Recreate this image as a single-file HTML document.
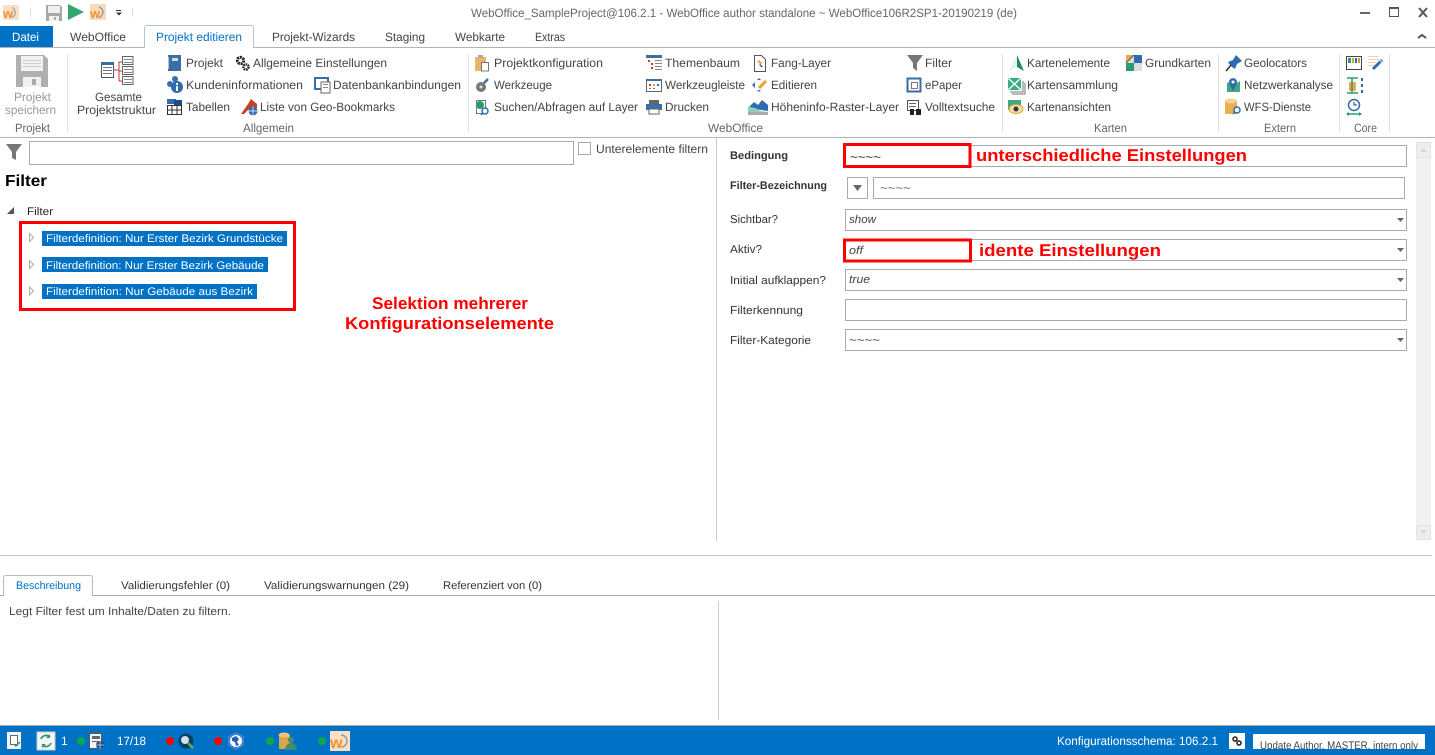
<!DOCTYPE html>
<html lang="de"><head><meta charset="utf-8"><title>WebOffice author</title>
<style>
html,body{margin:0;padding:0;background:#fff;width:1435px;height:755px;overflow:hidden}
svg{display:block;font-family:"Liberation Sans",sans-serif;font-size:12px}
.t{fill:#444}.l{fill:#666;font-size:12px}.d{fill:#999}
.s{fill:#333;font-size:11.5px}
.b{fill:none;stroke:#aaa;stroke-width:1}
.r{fill:none;stroke:#f00;stroke-width:3}
.a{fill:#f00;font-weight:bold;font-size:17px}
.i{font-style:italic;fill:#444;font-size:11.5px}
</style></head><body>
<svg width="1435" height="755" viewBox="0 0 1435 755" xmlns="http://www.w3.org/2000/svg" text-rendering="geometricPrecision">
<rect width="1435" height="755" fill="#fff"/>

<!-- QAT -->
<g id="logo1"><rect x="3" y="5" width="16" height="15" fill="#fbe0c8"/><text x="3" y="18" fill="#f0922c" font-weight="bold" font-size="13">w</text><path d="M12 7.500a5.500 5.500 0 0 1 0 10" fill="none" stroke="#aaa" stroke-width="1.500"/></g>
<rect x="30" y="9" width="1" height="8" fill="#ddd"/>
<path d="M46 5h14l2 2v14h-16z" fill="#a8a8a8"/><rect x="48" y="6" width="12" height="7" fill="#f0f0f0"/><rect x="49" y="16" width="10" height="5" fill="#f0f0f0"/><rect x="54" y="17" width="2" height="3" fill="#a8a8a8"/>
<path d="M68 4l16 8-16 8z" fill="#35a570"/>
<rect x="90" y="4" width="16" height="16" fill="#fbd9bd"/><text x="90" y="18" fill="#f0922c" font-weight="bold" font-size="13">w</text><path d="M99 7a5.500 5.500 0 0 1 0 10.500" fill="none" stroke="#999" stroke-width="1.500"/>
<rect x="116" y="10" width="5" height="1" fill="#333"/><path d="M116 12.500h6l-3 3z" fill="#333"/>
<rect x="132" y="9" width="1" height="8" fill="#ddd"/>
<text x="471" y="17" fill="#666" textLength="546" lengthAdjust="spacingAndGlyphs">WebOffice_SampleProject@106.2.1 - WebOffice author standalone ~ WebOffice106R2SP1-20190219 (de)</text>

<!-- Window buttons -->
<rect x="1360" y="12" width="10" height="2" fill="#666"/>
<rect x="1389.500" y="7.500" width="9" height="9" fill="none" stroke="#555"/><rect x="1389" y="7" width="10" height="2" fill="#555"/>
<path d="M1419 8l8 9M1427 8l-8 9" stroke="#555" stroke-width="2" fill="none"/>
<path d="M1418 38l4-3 4 3" stroke="#555" stroke-width="2" fill="none"/>

<!-- Tabs -->
<rect x="0" y="26" width="53" height="21" fill="#0072c6"/>
<text x="12" y="41" fill="#fff" textLength="27" lengthAdjust="spacingAndGlyphs">Datei</text>
<text x="70" y="41" class="t" textLength="56" lengthAdjust="spacingAndGlyphs">WebOffice</text>
<rect y="47" width="1435" height="1" fill="#b4b4b4"/>
<path d="M144.500 47.500V28q0-2.500 2.500-2.500h104q2.500 0 2.500 2.500V47.500" fill="#fff" stroke="#b4c8d4"/>
<rect x="145" y="47" width="108" height="1" fill="#fff"/>
<text x="156" y="41" fill="#0072c6" textLength="86" lengthAdjust="spacingAndGlyphs">Projekt editieren</text>
<text x="272" y="41" class="t" textLength="83" lengthAdjust="spacingAndGlyphs">Projekt-Wizards</text>
<text x="385" y="41" class="t" textLength="40" lengthAdjust="spacingAndGlyphs">Staging</text>
<text x="455" y="41" class="t" textLength="50" lengthAdjust="spacingAndGlyphs">Webkarte</text>
<text x="535" y="41" class="t" textLength="30" lengthAdjust="spacingAndGlyphs">Extras</text>

<!-- Ribbon -->
<rect y="137" width="1435" height="1" fill="#b4b4b4"/>
<g fill="#e2e2e2"><rect x="67" y="54" width="1" height="78"/><rect x="468" y="54" width="1" height="78"/><rect x="1002" y="54" width="1" height="78"/><rect x="1218" y="54" width="1" height="78"/><rect x="1339" y="54" width="1" height="78"/><rect x="1389" y="54" width="1" height="78"/></g>

<path d="M16 55h28l4 4v28H16z" fill="#b0b0b0"/><rect x="21" y="56" width="22" height="15" fill="#f1f1f1"/><g fill="#ccc"><rect x="23" y="60" width="18" height="1"/><rect x="23" y="63" width="18" height="1"/><rect x="23" y="66" width="18" height="1"/></g><rect x="23" y="77" width="18" height="10" fill="#f1f1f1"/><rect x="32" y="79" width="4" height="6" fill="#aaa"/>
<text x="14" y="101" class="d" textLength="37" lengthAdjust="spacingAndGlyphs">Projekt</text>
<text x="5" y="114" class="d" textLength="51" lengthAdjust="spacingAndGlyphs">speichern</text>
<text x="15" y="132" class="l" textLength="35" lengthAdjust="spacingAndGlyphs">Projekt</text>

<!-- Gesamte Projektstruktur icon -->
<rect x="101.500" y="62.500" width="12" height="15" fill="#fff" stroke="#555"/><rect x="101" y="62" width="13" height="3" fill="#3a6ea5"/><g fill="#777"><rect x="103" y="67" width="9" height="1"/><rect x="103" y="70" width="9" height="1"/><rect x="103" y="73" width="9" height="1"/></g>
<path d="M114 70h5M119 62v19M119 62h3M119 71h3M119 81h3" stroke="#c0392b" fill="none"/>
<g fill="#fff" stroke="#666"><rect x="122.500" y="56.500" width="10.500" height="8"/><rect x="122.500" y="66.500" width="10.500" height="8"/><rect x="122.500" y="76.500" width="10.500" height="8"/></g>
<g fill="#888"><rect x="124" y="59" width="8" height="1"/><rect x="124" y="62" width="8" height="1"/><rect x="124" y="69" width="8" height="1"/><rect x="124" y="72" width="8" height="1"/><rect x="124" y="79" width="8" height="1"/><rect x="124" y="82" width="8" height="1"/></g>
<text x="95" y="101" class="t" textLength="47" lengthAdjust="spacingAndGlyphs">Gesamte</text>
<text x="77" y="114" class="t" textLength="79" lengthAdjust="spacingAndGlyphs">Projektstruktur</text>

<!-- Allgemein icons -->
<rect x="168" y="55" width="13" height="16" fill="#3a6ea5"/><rect x="172" y="58" width="6" height="3" fill="#cde"/><rect x="167" y="57" width="2" height="12" fill="#fff" opacity=".6"/>
<text x="186" y="67" class="t" textLength="37" lengthAdjust="spacingAndGlyphs">Projekt</text>
<g fill="none" stroke="#222"><circle cx="240.500" cy="60.500" r="3.200" stroke-width="3" stroke-dasharray="2 .8"/><circle cx="246" cy="67" r="2.600" stroke-width="2.400" stroke-dasharray="1.600 .7"/></g>
<text x="253" y="67" class="t" textLength="134" lengthAdjust="spacingAndGlyphs">Allgemeine Einstellungen</text>
<circle cx="175" cy="79" r="3" fill="#3a6ea5"/><circle cx="170" cy="84" r="3" fill="#3a6ea5"/><circle cx="177" cy="87" r="6" fill="#2f6bb0"/><rect x="176" y="83" width="2" height="2" fill="#fff"/><rect x="176" y="86" width="2" height="5" fill="#fff"/>
<text x="186" y="89" class="t" textLength="117" lengthAdjust="spacingAndGlyphs">Kundeninformationen</text>
<rect x="315" y="78" width="13" height="11" fill="none" stroke="#3a6ea5" stroke-width="2"/><rect x="321" y="82" width="9" height="11" fill="#fff" stroke="#666"/><g fill="#888"><rect x="323" y="84" width="5" height="1"/><rect x="323" y="87" width="5" height="1"/></g>
<text x="333" y="89" class="t" textLength="128" lengthAdjust="spacingAndGlyphs">Datenbankanbindungen</text>
<rect x="167" y="99" width="9" height="5" fill="#2f6bb0"/><rect x="174" y="100" width="8" height="5" fill="#1f4f86"/><rect x="167.500" y="105.500" width="14" height="9" fill="#fff" stroke="#333"/><path d="M167 110h15M172 105v10M177 105v10" stroke="#333"/>
<text x="186" y="111" class="t" textLength="44" lengthAdjust="spacingAndGlyphs">Tabellen</text>
<path d="M241 114l7-10 3-5 6 5v4l-8 1-5 5z" fill="#c0432a"/><circle cx="253" cy="111" r="4.500" fill="#2f6bb0"/><path d="M248.500 111h9M253 106.500v9" stroke="#fff" stroke-width=".7"/>
<text x="260" y="111" class="t" textLength="135" lengthAdjust="spacingAndGlyphs">Liste von Geo-Bookmarks</text>
<text x="243" y="132" class="l" textLength="51" lengthAdjust="spacingAndGlyphs">Allgemein</text>

<!-- WebOffice icons -->
<path d="M475 57h11v14h-11z" fill="#e8b56a"/><rect x="478" y="55" width="5" height="3" fill="#aaa"/><rect x="481.500" y="62.500" width="7" height="8.500" fill="#fff" stroke="#777"/>
<text x="494" y="67" class="t" textLength="109" lengthAdjust="spacingAndGlyphs">Projektkonfiguration</text>
<circle cx="481" cy="87" r="5" fill="#777"/><circle cx="481" cy="87" r="1.500" fill="#ddd"/><path d="M484 83l4-4" stroke="#3a6ea5" stroke-width="2.500"/>
<text x="494" y="89" class="t" textLength="58" lengthAdjust="spacingAndGlyphs">Werkzeuge</text>
<rect x="476.500" y="100.500" width="9" height="13" fill="#fff" stroke="#777"/><circle cx="480" cy="105" r="4" fill="#2e9a6c"/><circle cx="485" cy="111" r="3" fill="#fff" stroke="#2f6bb0" stroke-width="1.500"/><path d="M483 113l-2 2" stroke="#2f6bb0" stroke-width="1.500"/>
<text x="494" y="111" class="t" textLength="144" lengthAdjust="spacingAndGlyphs">Suchen/Abfragen auf Layer</text>

<rect x="646" y="55" width="16" height="3" fill="#3a6ea5"/><g fill="#888"><rect x="655" y="60" width="7" height="1"/><rect x="655" y="63" width="7" height="1"/><rect x="655" y="66" width="7" height="1"/><rect x="655" y="69" width="7" height="1"/></g><g fill="#c0432a"><rect x="648" y="60" width="2" height="2"/><rect x="651" y="63" width="2" height="2"/><rect x="651" y="67" width="2" height="2"/></g>
<text x="665" y="67" class="t" textLength="75" lengthAdjust="spacingAndGlyphs">Themenbaum</text>
<rect x="646.500" y="79.500" width="15" height="12" fill="#fff" stroke="#666"/><rect x="646" y="79" width="16" height="2" fill="#3a6ea5"/><rect x="649" y="84" width="2" height="2" fill="#c0432a"/><rect x="653" y="84" width="2" height="2" fill="#e8a030"/><rect x="657" y="84" width="2" height="2" fill="#3a6ea5"/><rect x="649" y="88" width="2" height="1" fill="#2e9a6c"/><rect x="653" y="88" width="2" height="1" fill="#777"/>
<text x="665" y="89" class="t" textLength="80" lengthAdjust="spacingAndGlyphs">Werkzeugleiste</text>
<rect x="649" y="100" width="10" height="4" fill="#666"/><rect x="646" y="104" width="16" height="6" fill="#3a6ea5"/><rect x="649" y="109" width="10" height="5" fill="#fff" stroke="#666"/>
<text x="665" y="111" class="t" textLength="44" lengthAdjust="spacingAndGlyphs">Drucken</text>

<path d="M754.500 55.500h7l4 4v12h-11z" fill="#fff" stroke="#555"/><path d="M759 60l-2 2 3 1-1 3 3-3z" fill="#e8a030"/><path d="M759 63l4 4-2 0z" fill="#333"/>
<text x="771" y="67" class="t" textLength="60" lengthAdjust="spacingAndGlyphs">Fang-Layer</text>
<path d="M752 85l3-3v6zM759 78l2 2h-4zM759 92l-2-2h4z" fill="#3a6ea5"/><path d="M759 88l7-7" stroke="#e8a030" stroke-width="3"/>
<text x="771" y="89" class="t" textLength="46" lengthAdjust="spacingAndGlyphs">Editieren</text>
<path d="M748 108l6-6 4 3 4-5 6 5v6z" fill="#2f6bb0"/><path d="M748 107q8 0 12 4l8 1v2h-20z" fill="#8fd0c0"/><rect x="748" y="112" width="20" height="3" fill="#aaa"/>
<text x="771" y="111" class="t" textLength="128" lengthAdjust="spacingAndGlyphs">Höheninfo-Raster-Layer</text>

<path d="M907 55h16l-6 8v8l-4-3v-5z" fill="#777"/>
<text x="925" y="67" class="t" textLength="27" lengthAdjust="spacingAndGlyphs">Filter</text>
<rect x="907.500" y="78.500" width="13" height="13" fill="#fff" stroke="#3a6ea5" stroke-width="2"/><rect x="911.500" y="82.500" width="6" height="6" fill="none" stroke="#777"/>
<text x="925" y="89" class="t" textLength="37" lengthAdjust="spacingAndGlyphs">ePaper</text>
<rect x="907.500" y="100.500" width="11" height="10" fill="#fff" stroke="#555"/><g fill="#666"><rect x="909" y="103" width="7" height="1"/><rect x="909" y="106" width="7" height="1"/></g><rect x="910" y="109" width="4" height="6" fill="#222"/><rect x="916" y="109" width="5" height="6" fill="#222"/>
<text x="925" y="111" class="t" textLength="70" lengthAdjust="spacingAndGlyphs">Volltextsuche</text>
<text x="708" y="132" class="l" textLength="55" lengthAdjust="spacingAndGlyphs">WebOffice</text>

<!-- Karten -->
<path d="M1017 55l7 16-7-4z" fill="#1e8a68"/><path d="M1017 55l-8 16 8-4z" fill="#e6f0ec"/>
<text x="1027" y="67" class="t" textLength="83" lengthAdjust="spacingAndGlyphs">Kartenelemente</text>
<rect x="1008" y="78" width="13" height="12" fill="#3fa880"/><path d="M1008 78l13 12M1021 78l-13 12" stroke="#dff" stroke-width="1.500"/><path d="M1023 81v11h-13M1025 83v11h-13" fill="none" stroke="#777"/>
<text x="1027" y="89" class="t" textLength="91" lengthAdjust="spacingAndGlyphs">Kartensammlung</text>
<rect x="1008" y="100" width="13" height="10" fill="#3fa880"/><ellipse cx="1016" cy="109" rx="7" ry="4.500" fill="#f4dca8" stroke="#e8a030"/><circle cx="1016" cy="109" r="2.500" fill="#334"/>
<text x="1027" y="111" class="t" textLength="84" lengthAdjust="spacingAndGlyphs">Kartenansichten</text>
<rect x="1126" y="55" width="16" height="16" fill="#ddd"/><path d="M1126 55h8l-8 8z" fill="#e8a84c"/><path d="M1134 55h8v8h-8z" fill="#2f6bb0"/><path d="M1126 63h8v8h-8z" fill="#2e9a6c"/><path d="M1126 63l8-8" stroke="#555"/>
<text x="1145" y="67" class="t" textLength="66" lengthAdjust="spacingAndGlyphs">Grundkarten</text>
<text x="1094" y="132" class="l" textLength="33" lengthAdjust="spacingAndGlyphs">Karten</text>

<!-- Extern -->
<path d="M1230 65l-2-3 5-2 3-5 6 6-5 3-2 5-3-2z" fill="#2f6bb0"/><path d="M1226 71l5-6" stroke="#333" stroke-width="1.500"/>
<text x="1244" y="67" class="t" textLength="63" lengthAdjust="spacingAndGlyphs">Geolocators</text>
<path d="M1227 92v-9l5-2 5 2 3-2v11z" fill="#3fa880"/><path d="M1233 91l-3.500-7a4 4 0 1 1 7 0z" fill="#2f6bb0"/><circle cx="1233" cy="82" r="1.500" fill="#fff"/>
<text x="1244" y="89" class="t" textLength="89" lengthAdjust="spacingAndGlyphs">Netzwerkanalyse</text>
<path d="M1225 101h12v13h-12z" fill="#e8b04e"/><ellipse cx="1231" cy="101" rx="6" ry="2.500" fill="#f3d48c"/><circle cx="1237" cy="110" r="3" fill="#fff" stroke="#2f6bb0" stroke-width="1.500"/><path d="M1235 112l-2 2" stroke="#2f6bb0" stroke-width="1.500"/>
<text x="1244" y="111" class="t" textLength="67" lengthAdjust="spacingAndGlyphs">WFS-Dienste</text>
<text x="1264" y="132" class="l" textLength="32" lengthAdjust="spacingAndGlyphs">Extern</text>

<!-- Core -->
<rect x="1346.500" y="56.500" width="15" height="13" fill="#fff" stroke="#444"/><rect x="1348" y="58" width="3" height="5" fill="#2e9a6c"/><rect x="1352" y="58" width="2" height="5" fill="#e8a030"/><rect x="1355" y="58" width="2" height="5" fill="#2f6bb0"/><rect x="1358" y="58" width="2" height="5" fill="#c8a030"/>
<g fill="#f2cf9e"><rect x="1368" y="56" width="11" height="1"/><rect x="1368" y="59" width="11" height="1"/><rect x="1368" y="62" width="8" height="1"/><rect x="1368" y="65" width="6" height="1"/></g><path d="M1373 69l6-6" stroke="#2f6bb0" stroke-width="3"/><path d="M1379 63l3-3" stroke="#2f6bb0" stroke-width="3" stroke-dasharray="2 1"/>
<rect x="1349" y="82" width="7" height="9" rx="1.500" fill="#e8a84c"/><path d="M1347 78h11M1347 93h11M1352 78v15" stroke="#2e9a6c" stroke-width="1.500"/><g fill="#2f6bb0"><rect x="1361" y="78" width="2" height="3"/><rect x="1361" y="84" width="2" height="3"/><rect x="1361" y="90" width="2" height="3"/></g>
<circle cx="1354" cy="105" r="5.500" fill="#fff" stroke="#2f6bb0" stroke-width="1.500"/><path d="M1354 102v3h3" stroke="#333" fill="none"/><path d="M1347 114h14" stroke="#2e9a6c" stroke-width="1.500"/><path d="M1346 114l3-2v4zM1362 114l-3-2v4z" fill="#2e9a6c"/>
<text x="1354" y="132" class="l" textLength="23" lengthAdjust="spacingAndGlyphs">Core</text>

<!-- Left pane -->
<path d="M6 144h16l-6 8v8l-4-2v-6z" fill="#777"/>
<rect x="29.500" y="141.500" width="544" height="23" fill="#fff" class="b"/>
<rect x="578.500" y="142.500" width="12" height="12" fill="#fff" class="b"/>
<text x="596" y="153" class="t" textLength="112" lengthAdjust="spacingAndGlyphs">Unterelemente filtern</text>
<text x="5" y="186" fill="#000" font-weight="bold" font-size="16" textLength="42" lengthAdjust="spacingAndGlyphs">Filter</text>
<path d="M7 214l7-7v7z" fill="#555"/>
<text x="27" y="215" fill="#222" font-size="11" textLength="26" lengthAdjust="spacingAndGlyphs">Filter</text>

<rect x="42" y="231" width="245" height="15" fill="#0072c6"/>
<rect x="42" y="257" width="226" height="15" fill="#0072c6"/>
<rect x="42" y="284" width="215" height="15" fill="#0072c6"/>
<text x="46" y="242" fill="#fff" font-size="11" textLength="237" lengthAdjust="spacingAndGlyphs">Filterdefinition: Nur Erster Bezirk Grundstücke</text>
<text x="46" y="269" fill="#fff" font-size="11" textLength="218" lengthAdjust="spacingAndGlyphs">Filterdefinition: Nur Erster Bezirk Gebäude</text>
<text x="46" y="295" fill="#fff" font-size="11" textLength="207" lengthAdjust="spacingAndGlyphs">Filterdefinition: Nur Gebäude aus Bezirk</text>
<g fill="#fff" stroke="#aaa"><path d="M29.500 233.500l4 4-4 4z"/><path d="M29.500 260.500l4 4-4 4z"/><path d="M29.500 287l4 4-4 4z"/></g>
<rect x="20.500" y="222.500" width="274" height="87" class="r"/>
<text x="372" y="309" class="a" textLength="156" lengthAdjust="spacingAndGlyphs">Selektion mehrerer</text>
<text x="345" y="329" class="a" textLength="209" lengthAdjust="spacingAndGlyphs">Konfigurationselemente</text>

<!-- Right pane -->
<rect x="716" y="138" width="1" height="403" fill="#ccc"/>
<text x="730" y="159" fill="#333" font-weight="bold" font-size="11" textLength="58" lengthAdjust="spacingAndGlyphs">Bedingung</text>
<text x="730" y="189" fill="#333" font-weight="bold" font-size="11" textLength="97" lengthAdjust="spacingAndGlyphs">Filter-Bezeichnung</text>
<text x="730" y="223" class="s" textLength="48" lengthAdjust="spacingAndGlyphs">Sichtbar?</text>
<text x="730" y="253" class="s" textLength="32" lengthAdjust="spacingAndGlyphs">Aktiv?</text>
<text x="730" y="284" class="s" textLength="96" lengthAdjust="spacingAndGlyphs">Initial aufklappen?</text>
<text x="730" y="314" class="s" textLength="73" lengthAdjust="spacingAndGlyphs">Filterkennung</text>
<text x="730" y="344" class="s" textLength="81" lengthAdjust="spacingAndGlyphs">Filter-Kategorie</text>

<g fill="#fff" class="b">
<rect x="845.500" y="145.500" width="561" height="21"/>
<rect x="847.500" y="177.500" width="20" height="21"/>
<rect x="873.500" y="177.500" width="531" height="21"/>
<rect x="845.500" y="209.500" width="561" height="21"/>
<rect x="845.500" y="239.500" width="561" height="21"/>
<rect x="845.500" y="269.500" width="561" height="21"/>
<rect x="845.500" y="299.500" width="561" height="21"/>
<rect x="845.500" y="329.500" width="561" height="21"/>
</g>
<path d="M853 185h9l-4.500 6z" fill="#666"/>
<g fill="#666"><path d="M1397 218h7l-3.500 4z"/><path d="M1397 248h7l-3.500 4z"/><path d="M1397 278h7l-3.500 4z"/><path d="M1397 338h7l-3.500 4z"/></g>
<text x="850" y="161" fill="#222" font-size="12" textLength="31" lengthAdjust="spacingAndGlyphs">~~~~</text>
<text x="880" y="192" fill="#666" font-size="12" textLength="31" lengthAdjust="spacingAndGlyphs">~~~~</text>
<text x="849" y="223" class="i" textLength="27" lengthAdjust="spacingAndGlyphs">show</text>
<text x="849" y="254" class="i" textLength="14" lengthAdjust="spacingAndGlyphs">off</text>
<text x="849" y="283" class="i" textLength="21" lengthAdjust="spacingAndGlyphs">true</text>
<text x="849" y="344" fill="#444" font-size="12" textLength="31" lengthAdjust="spacingAndGlyphs">~~~~</text>
<rect x="844.500" y="144.500" width="125.500" height="22" class="r"/>
<rect x="844.500" y="240" width="126" height="21" class="r"/>
<text x="976" y="161" class="a" textLength="271" lengthAdjust="spacingAndGlyphs">unterschiedliche Einstellungen</text>
<text x="979" y="256" class="a" textLength="182" lengthAdjust="spacingAndGlyphs">idente Einstellungen</text>

<!-- Scrollbar -->
<rect x="1416" y="142" width="15" height="398" fill="#f1f1f1"/>
<rect x="1416.500" y="142.500" width="14" height="15" fill="#eee" stroke="#e2e2e2"/>
<rect x="1416.500" y="525.500" width="14" height="14" fill="#eee" stroke="#e2e2e2"/>
<path d="M1420 152h7l-3.500-4z" fill="#d8d8d8"/><path d="M1420 530h7l-3.500 4z" fill="#d8d8d8"/>

<!-- Bottom tabs -->
<rect y="555" width="1432" height="1" fill="#c4c4c4"/>
<rect y="595" width="1435" height="1" fill="#aaa"/>
<path d="M3.500 596V578q0-2.500 2.500-2.500h84q2.500 0 2.500 2.500V596" fill="#fff" stroke="#bbb"/>
<rect x="4" y="595" width="88" height="1" fill="#fff"/>
<text x="16" y="589" fill="#0072c6" font-size="11" textLength="65" lengthAdjust="spacingAndGlyphs">Beschreibung</text>
<text x="121" y="589" fill="#333" font-size="11" textLength="109" lengthAdjust="spacingAndGlyphs">Validierungsfehler (0)</text>
<text x="264" y="589" fill="#333" font-size="11" textLength="145" lengthAdjust="spacingAndGlyphs">Validierungswarnungen (29)</text>
<text x="443" y="589" fill="#333" font-size="11" textLength="99" lengthAdjust="spacingAndGlyphs">Referenziert von (0)</text>
<text x="9" y="615" fill="#444" font-size="11.500" textLength="222" lengthAdjust="spacingAndGlyphs">Legt Filter fest um Inhalte/Daten zu filtern.</text>
<rect x="718" y="601" width="1" height="119" fill="#ccc"/>

<!-- Status bar -->
<rect y="725" width="1435" height="1" fill="#aaa"/>
<rect y="726" width="1435" height="29" fill="#0072c6"/>
<rect x="7" y="732" width="14" height="17" fill="#f4f4f4"/><rect x="10.500" y="735.500" width="7" height="9" fill="#fff" stroke="#667"/><path d="M14 744l2 2 4-4" stroke="#2e9a6c" stroke-width="1.500" fill="none"/>
<rect x="37" y="732" width="18" height="18" fill="#f4f6fa" stroke="#ccc"/><path d="M50 737a5.500 5.500 0 0 0-9 2M42 745a5.500 5.500 0 0 0 9-2" stroke="#2e9a6c" stroke-width="1.700" fill="none"/><path d="M50 734v4h-4zM42 748v-4h4z" fill="#2e9a6c"/>
<text x="61" y="745" fill="#fff" font-size="12">1</text>
<circle cx="81" cy="741" r="4" fill="#0ea84a"/>
<rect x="89.500" y="733.500" width="12" height="15" fill="#f4f4f4" stroke="#555"/><g fill="#666"><rect x="92" y="736" width="8" height="3"/><rect x="92" y="741" width="8" height="1"/></g><circle cx="100" cy="745" r="4" fill="#1f4f86"/><path d="M96 745h8M100 741v8" stroke="#fff" stroke-width=".6"/>
<text x="117" y="745" fill="#fff" font-size="12" textLength="29" lengthAdjust="spacingAndGlyphs">17/18</text>
<circle cx="170" cy="741" r="4" fill="#f00"/>
<circle cx="186" cy="741" r="7.500" fill="#0b3f64"/><circle cx="185" cy="740" r="4" fill="#cfe4ee"/><path d="M188 743l5 5" stroke="#6aa84f" stroke-width="2.500"/>
<circle cx="218" cy="741" r="4" fill="#f00"/>
<path d="M236 732l8 4v10l-8 4-8-4v-10z" fill="#3f7fd0"/><circle cx="236" cy="741" r="6" fill="#fff"/><path d="M232 738l4-2 3 3-2 3 2 3-3 1-1-4-3-1z" fill="#1f5fb0"/>
<circle cx="270" cy="741" r="4" fill="#0ea84a"/>
<path d="M279 735h11v14h-11z" fill="#d9a54c"/><ellipse cx="284" cy="735" rx="5.500" ry="2.500" fill="#eec67a"/><circle cx="291" cy="740" r="3" fill="#3f8f6c"/><path d="M285 750q1-7 6-7t6 7z" fill="#3f8f6c"/>
<circle cx="322" cy="741" r="4" fill="#0ea84a"/>
<rect x="330" y="731" width="20" height="20" fill="#fbe0c8"/><text x="330" y="748" fill="#f0922c" font-weight="bold" font-size="16">w</text><path d="M341 735a6 6 0 0 1 0 12" fill="none" stroke="#999" stroke-width="1.500"/>

<text x="1057" y="745" fill="#fff" font-size="12" textLength="161" lengthAdjust="spacingAndGlyphs">Konfigurationsschema: 106.2.1</text>
<rect x="1229" y="733" width="16" height="16" fill="#fff"/><circle cx="1235" cy="739" r="2" fill="none" stroke="#222" stroke-width="1.500"/><circle cx="1239" cy="743" r="2" fill="none" stroke="#222" stroke-width="1.500"/>
<rect x="1253" y="734" width="172" height="15" fill="#fff"/>
<text x="1260" y="749" fill="#444" font-size="11" textLength="158" lengthAdjust="spacingAndGlyphs">Update Author, MASTER, intern only</text>
</svg>
</body></html>
